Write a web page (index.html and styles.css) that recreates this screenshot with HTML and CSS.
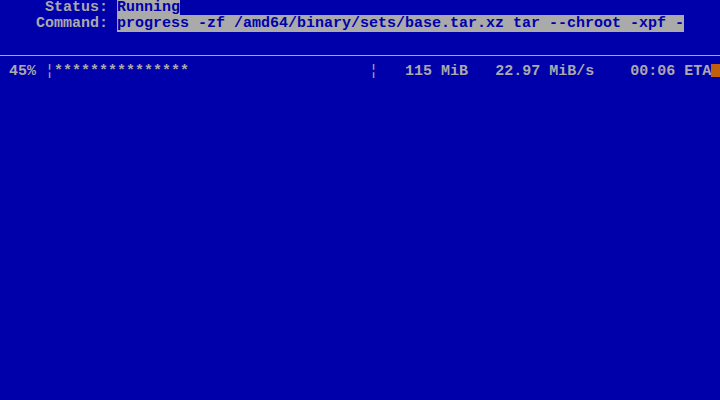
FILE: index.html
```html
<!DOCTYPE html>
<html lang="en">
  <head>
    <meta charset="UTF-8" />
    <title>sysinst: extracting sets</title>
    <link rel="stylesheet" href="styles.css">
  </head>
  <body>
    <div class="screen">
      <div class="row">     Status: <span class="hl">Running</span></div>
      <div class="row">    Command: <span class="hl">progress -zf /amd64/binary/sets/base.tar.xz tar --chroot -xpf -</span></div>
      <div class="row"></div>
      <div class="rule"></div>
      <div class="row"> 45% <span class="bar">¦</span>***************                    <span class="bar">¦</span>   115 MiB   22.97 MiB/s    00:06 ETA<span class="cursor"></span></div>
    </div>
  </body>
</html>
```

FILE: styles.css
```css
*, *:before, *:after {
  box-sizing: border-box;
}
html, body {
  margin: 0;
  padding: 0;
  background: #0000aa;
}
.screen {
  width: 720px;
  height: 400px;
  background: #0000aa;
  color: #aaaaaa;
  font-family: "Liberation Mono", "DejaVu Sans Mono", monospace;
  font-size: 15px;
  font-weight: bold;
  line-height: 16px;
  overflow: hidden;
}
.row {
  height: 16px;
  white-space: pre;
}
.hl {
  background: #aaaaaa;
  color: #0000aa;
}
.rule {
  height: 16px;
  padding-top: 7px;
}
.rule:before {
  content: "";
  display: block;
  height: 1px;
  background: #a4a4e8;
}
.bar {
  font-weight: normal;
}
.cursor {
  display: inline-block;
  width: 9px;
  height: 13px;
  vertical-align: -2px;
  background: #c0600c;
}
```
